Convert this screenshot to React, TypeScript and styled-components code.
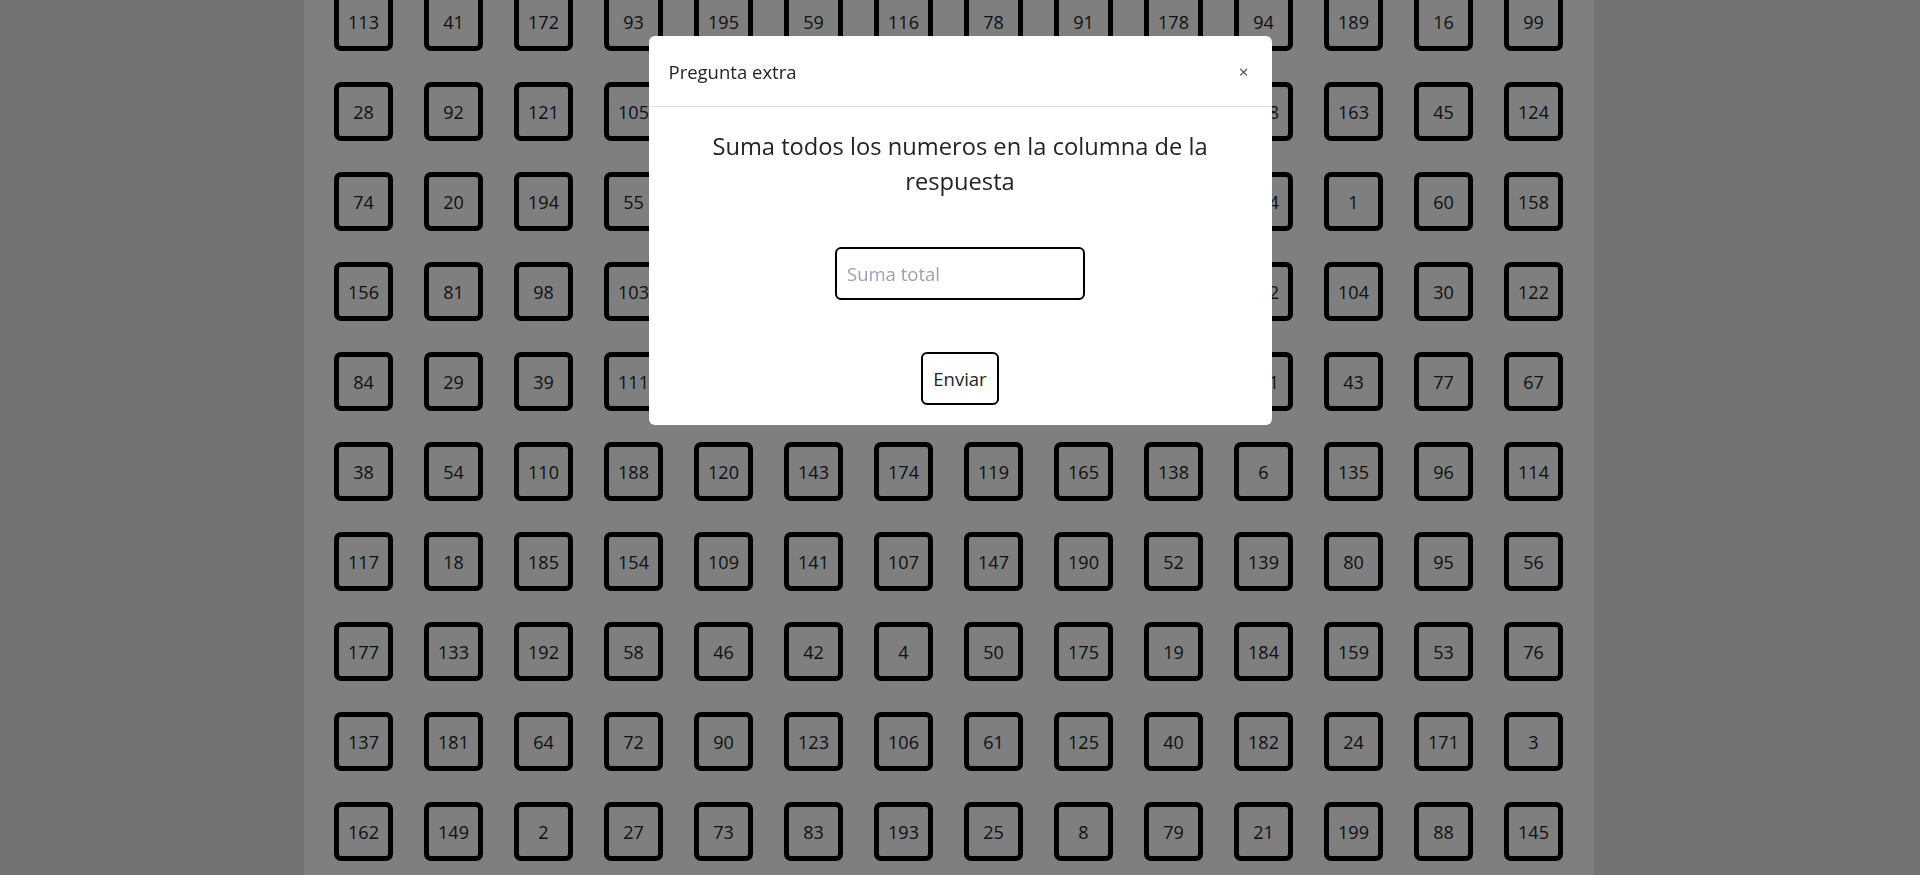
import React from "react";
import styled, { createGlobalStyle } from "styled-components";

const GlobalStyle = createGlobalStyle`
  html, body {
    margin: 0;
    padding: 0;
    height: 100%;
    overflow: hidden;
  }
  body {
    background: #e5e7eb;
    font-family: "Open Sans", "Noto Sans", sans-serif;
    color: #212529;
  }
  * { box-sizing: border-box; }
`;

const rows: (number | string)[][] = [
  [113, 41, 172, 93, 195, 59, 116, 78, 91, 178, 94, 189, 16, 99],
  [28, 92, 121, 105, 12, 170, 65, 33, 151, 86, 168, 163, 45, 124],
  [74, 20, 194, 55, 97, 127, 10, 160, 37, 153, 134, 1, 60, 158],
  [156, 81, 98, 103, 69, 146, 183, 23, 130, 47, 102, 104, 30, 122],
  [84, 29, 39, 111, 152, 7, 89, 198, 118, 62, 131, 43, 77, 67],
  [38, 54, 110, 188, 120, 143, 174, 119, 165, 138, 6, 135, 96, 114],
  [117, 18, 185, 154, 109, 141, 107, 147, 190, 52, 139, 80, 95, 56],
  [177, 133, 192, 58, 46, 42, 4, 50, 175, 19, 184, 159, 53, 76],
  [137, 181, 64, 72, 90, 123, 106, 61, 125, 40, 182, 24, 171, 3],
  [162, 149, 2, 27, 73, 83, 193, 25, 8, 79, 21, 199, 88, 145],
];

const Page = styled.div`
  min-height: 100vh;
  display: flex;
  justify-content: flex-start;
`;

const Panel = styled.main`
  margin-left: 304px;
  width: 1290px;
  min-height: 100vh;
  background: #ffffff;
  padding: 0 31px 0 30px;
`;

const Grid = styled.div`
  margin-top: -8px;
  display: grid;
  grid-template-columns: repeat(14, 59px);
  column-gap: 31px;
  row-gap: 31px;
`;

const Cell = styled.div`
  width: 59px;
  height: 59px;
  border: 5px solid #000;
  border-radius: 7px;
  display: flex;
  align-items: center;
  justify-content: center;
  font-size: 18px;
  color: #212529;
`;

const Backdrop = styled.div`
  position: fixed;
  inset: 0;
  background: rgba(0, 0, 0, 0.5);
`;

const ModalLayer = styled.div`
  position: fixed;
  inset: 0;
  display: flex;
  justify-content: center;
  align-items: flex-start;
  padding-top: 36px;
`;

const Dialog = styled.div`
  width: 623px;
  background: #fff;
  border-radius: 6px;
  overflow: hidden;
`;

const Header = styled.div`
  display: flex;
  align-items: center;
  justify-content: space-between;
  padding: 21px 20px 19px 20px;
  border-bottom: 1px solid #dee2e6;
`;

const Title = styled.h5`
  margin: 0;
  font-size: 18.5px;
  line-height: 30px;
  font-weight: 400;
  color: #212529;
`;

const Close = styled.button`
  border: none;
  background: transparent;
  padding: 0 3px;
  font-family: "Open Sans", sans-serif;
  font-size: 17px;
  line-height: 30px;
  color: #444;
  cursor: pointer;
`;

const Body = styled.div`
  padding: 20px;
  display: flex;
  flex-direction: column;
  align-items: center;
`;

const Question = styled.p`
  margin: 2px 0 0;
  font-size: 23.7px;
  line-height: 35px;
  text-align: center;
  color: #212529;
  max-width: 560px;
`;

const Input = styled.input`
  margin-top: 48px;
  width: 250px;
  height: 53px;
  border: 2px solid #000;
  border-radius: 6px;
  padding: 0 10px;
  font-family: "Open Sans", sans-serif;
  font-size: 18.5px;
  color: #212529;
  outline: none;
  &::placeholder {
    color: #9ca3af;
  }
`;

const Submit = styled.button`
  margin-top: 52px;
  height: 53px;
  padding: 0 10px;
  border: 2px solid #000;
  border-radius: 6px;
  background: #fff;
  font-family: "Open Sans", sans-serif;
  font-size: 18.5px;
  color: #212529;
  cursor: pointer;
`;

export default function App() {
  return (
    <>
      <GlobalStyle />
      <Page>
        <Panel>
          <Grid>
            {rows.flat().map((n, i) => (
              <Cell key={i}>{n}</Cell>
            ))}
          </Grid>
        </Panel>
      </Page>
      <Backdrop />
      <ModalLayer>
        <Dialog role="dialog">
          <Header>
            <Title>Pregunta extra</Title>
            <Close aria-label="Cerrar">×</Close>
          </Header>
          <Body>
            <Question>Suma todos los numeros en la columna de la respuesta</Question>
            <Input placeholder="Suma total" />
            <Submit>Enviar</Submit>
          </Body>
        </Dialog>
      </ModalLayer>
    </>
  );
}
